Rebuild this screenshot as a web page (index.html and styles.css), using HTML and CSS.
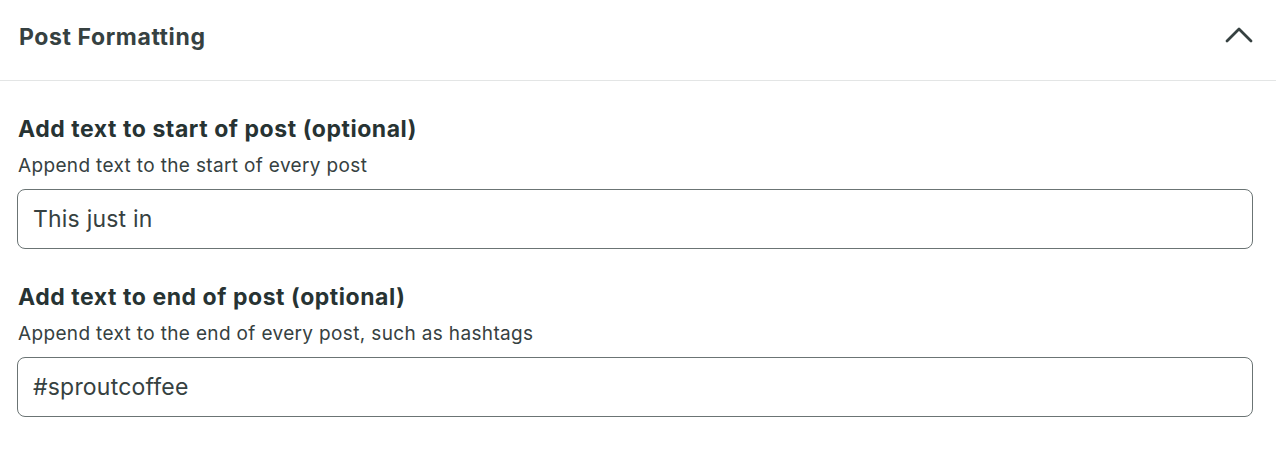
FILE: index.html
```html
<!DOCTYPE html>
<html lang="en">
<head>
  <meta charset="UTF-8" />
  <title>Post Formatting</title>
  <link rel="stylesheet" href="styles.css">
</head>
<body>
  <section class="panel">
    <div class="panel-header">
      <h1>Post Formatting</h1>
      <button class="toggle" type="button" aria-label="Collapse">
        <svg width="28" height="16" viewBox="0 0 28 16" fill="none">
          <path d="M2 14 L14 2 L26 14" stroke="#364141" stroke-width="2.8" stroke-linecap="round" stroke-linejoin="round"/>
        </svg>
      </button>
    </div>

    <div class="panel-body">
      <div class="field">
        <label for="startText">Add text to start of post (optional)</label>
        <p class="hint">Append text to the start of every post</p>
        <input id="startText" type="text" value="This just in">
      </div>

      <div class="field">
        <label for="endText">Add text to end of post (optional)</label>
        <p class="hint">Append text to the end of every post, such as hashtags</p>
        <input id="endText" type="text" value="#sproutcoffee">
      </div>
    </div>
  </section>
</body>
</html>
```

FILE: styles.css
```css
body {
  margin: 0;
  background-color: #fff;
  font-family: Inter, "Noto Sans", sans-serif;
  color: #364141;
}
.panel {
  width: 100%;
}
.panel-header {
  height: 81px;
  display: flex;
  align-items: flex-start;
  justify-content: space-between;
  padding: 23px 23px 0 19px;
  border-bottom: 1px solid #e3e5e5;
  box-sizing: border-box;
}
.panel-header h1 {
  margin: 0;
  font-size: 23px;
  line-height: 28px;
  font-weight: 700;
  letter-spacing: 0.6px;
  color: #364141;
}
.toggle {
  background: none;
  border: none;
  padding: 0;
  margin-top: 4px;
  display: flex;
  cursor: pointer;
}
.panel-body {
  padding: 34px 23px 0 17px;
}
.field {
  margin-bottom: 34px;
}
label {
  display: block;
  font-size: 23px;
  font-weight: 700;
  line-height: 28px;
  letter-spacing: 0.55px;
  color: #273333;
  padding-left: 1px;
}
.hint {
  margin: 11px 0 11px;
  font-size: 19px;
  line-height: 24px;
  letter-spacing: 0.35px;
  padding-left: 1px;
}
input {
  display: block;
  width: 100%;
  box-sizing: border-box;
  height: 60px;
  padding: 0 15px;
  font-family: Inter, "Noto Sans", sans-serif;
  font-size: 23px;
  letter-spacing: 0.2px;
  color: #364141;
  border: 1px solid #6b7474;
  border-radius: 8px;
  outline: none;
}
```
